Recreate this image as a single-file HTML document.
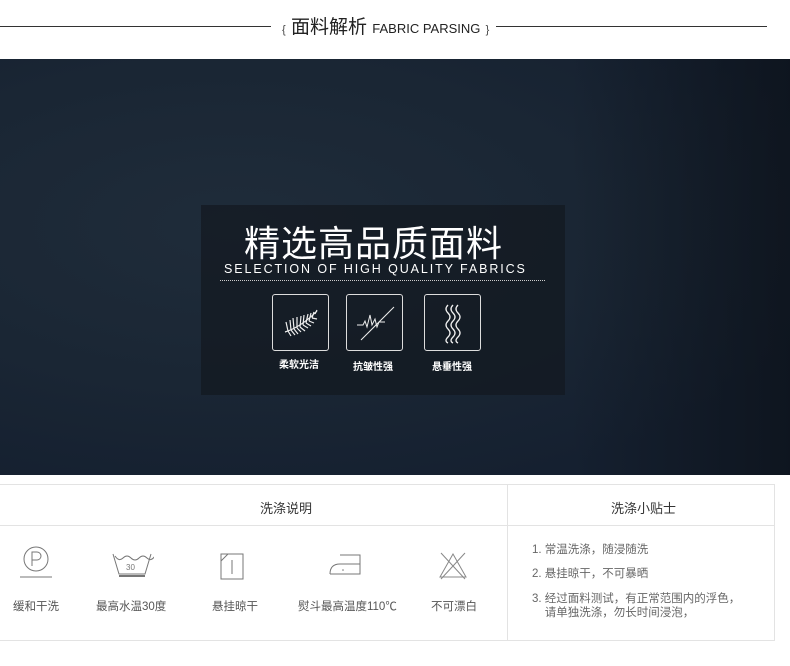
<!DOCTYPE html>
<html><head><meta charset="utf-8">
<style>
*{margin:0;padding:0;box-sizing:border-box}
body{width:790px;height:666px;background:#fff;font-family:"Liberation Sans","Noto Sans CJK SC",sans-serif;position:relative;overflow:hidden}
.hl{position:absolute;top:26px;height:1px;background:#333}
.title{position:absolute;top:12px;left:282px;font-size:19px;color:#222;white-space:nowrap}
.title .en{font-size:13px}
.title .br{font-size:11px;color:#444}
.banner{position:absolute;left:0;top:59px;width:790px;height:416px;
background:radial-gradient(ellipse at 30% 40%,#1f2c3a 0%,#1a2634 45%,#152030 80%),#18222f;}
.banner:after{content:"";position:absolute;right:0;top:0;width:220px;height:100%;background:linear-gradient(90deg,rgba(10,14,20,0),rgba(10,14,20,.6))}
.panel{position:absolute;left:201px;top:205px;width:364px;height:190px;background:rgba(18,24,32,.7);z-index:2}
.h1{position:absolute;left:43px;top:10px;font-size:36px;color:#fff;letter-spacing:1px;font-weight:400;white-space:nowrap}
.h2{position:absolute;left:23px;top:57px;font-size:12.5px;color:#fff;letter-spacing:1.9px;white-space:nowrap}
.dot{position:absolute;left:19px;top:75px;width:325px;border-top:1px dotted #ccc}
.ib{position:absolute;top:89px;width:57px;height:57px;border:1px solid #ddd;border-radius:3px}
.cap{position:absolute;font-size:10px;color:#fff;font-weight:bold;white-space:nowrap}
.tbl{position:absolute;top:484px;left:0;width:775px;height:157px;border:1px solid #e3e3e3;border-left:none}
.vline{position:absolute;left:507px;top:0;width:1px;height:100%;background:#e3e3e3}
.hline{position:absolute;left:0;top:40px;width:100%;height:1px;background:#e3e3e3}
.th{position:absolute;top:13px;font-size:13px;color:#333}
.lab{position:absolute;top:113px;font-size:11.5px;color:#555;white-space:nowrap}
.tip{position:absolute;left:532px;font-size:11.5px;color:#666;white-space:nowrap;line-height:14px}
svg{position:absolute}
</style></head><body>
<div class="hl" style="left:0;width:271px"></div>
<div class="hl" style="left:496px;width:271px"></div>
<div class="title"><span class="br">{</span> 面料解析 <span class="en">FABRIC PARSING</span> <span class="br">}</span></div>

<div class="banner"></div>
<div class="panel">
  <div class="h1">精选高品质面料</div>
  <div class="h2">SELECTION OF HIGH QUALITY FABRICS</div>
  <div class="dot"></div>
  <div class="ib" style="left:71px">
    <svg width="57" height="57" viewBox="0 0 57 57"><g stroke="#eee" stroke-width="1.2" fill="none">
      <path d="M12 37 Q28 32 44 16"/>
      <path d="M15 36l-2-9M18 35l-1-10M21 34l-1-11M24 33l0-11M27 32l1-11M30 30l1-10M33 28l2-9M36 26l2-8M39 23l2-6M42 19l2-4"/>
      <path d="M15 36l3 5M18 35l4 5M21 34l4 5M24 33l4 4M27 32l5 4M30 30l5 3M33 28l5 3M36 26l5 2M39 23l5 1"/>
    </g></svg>
  </div>
  <div class="ib" style="left:145px">
    <svg width="57" height="57" viewBox="0 0 57 57"><g stroke="#eee" stroke-width="1" fill="none">
      <path d="M10 30h6l2-4 2 6 3-12 2 10 3-6 2 8 2-5h6"/>
      <path d="M14 45L47 12"/>
    </g></svg>
  </div>
  <div class="ib" style="left:223px">
    <svg width="57" height="57" viewBox="0 0 57 57"><g stroke="#eee" stroke-width="1.3" fill="none">
      <path d="M23 10q-4 4 0 8t0 8 0 8 0 8 0 6"/>
      <path d="M28 10q-4 4 0 8t0 8 0 8 0 8 0 6"/>
      <path d="M33 10q-4 4 0 8t0 8 0 8 0 8 0 6"/>
    </g></svg>
  </div>
  <div class="cap" style="left:78px;top:151px">柔软光洁</div>
  <div class="cap" style="left:152px;top:153px">抗皱性强</div>
  <div class="cap" style="left:231px;top:153px">悬垂性强</div>
</div>

<div class="tbl">
  <div class="vline"></div>
  <div class="hline"></div>
  <div class="th" style="left:260px">洗涤说明</div>
  <div class="th" style="left:611px">洗涤小贴士</div>
  <svg style="left:18px;top:60px" width="36" height="36" viewBox="0 0 36 36"><g stroke="#777" fill="none" stroke-width="1"><circle cx="18" cy="14" r="12"/><path d="M14 21V7h5a4 4 0 0 1 0 8h-5"/><path d="M2 32h32"/></g></svg>
  <svg style="left:110px;top:64px" width="44" height="32" viewBox="0 0 44 32"><g stroke="#777" fill="none" stroke-width="1"><path d="M3 5l6 20h26l6-20"/><path d="M5 7q4 6 8 2t8 0 8 0 8 0 8-2"/><path d="M9 27h26" stroke-width="2"/></g><text x="16" y="21" font-size="8" fill="#777" font-family="Liberation Sans">30</text></svg>
  <svg style="left:219px;top:67px" width="28" height="32" viewBox="0 0 28 32"><g stroke="#777" fill="none" stroke-width="1"><rect x="2" y="2" width="22" height="25"/><path d="M2 9l7-7M13 8v14"/></g></svg>
  <svg style="left:328px;top:67px" width="36" height="28" viewBox="0 0 36 28"><g stroke="#777" fill="none" stroke-width="1"><path d="M2 22h30V3H12M2 22q0-10 10-10h20"/></g><circle cx="15" cy="18" r="0.8" fill="#777"/></svg>
  <svg style="left:438px;top:65px" width="30" height="34" viewBox="0 0 30 34"><g stroke="#888" fill="none" stroke-width="1"><path d="M15 4L2 27h26z"/><path d="M3 3l24 26M27 3L3 29"/></g></svg>
  <div class="lab" style="left:13px">缓和干洗</div>
  <div class="lab" style="left:96px">最高水温30度</div>
  <div class="lab" style="left:212px">悬挂晾干</div>
  <div class="lab" style="left:298px">熨斗最高温度110℃</div>
  <div class="lab" style="left:431px">不可漂白</div>
</div>
<div class="tip" style="top:543px">1. 常温洗涤，随浸随洗</div>
<div class="tip" style="top:567px">2. 悬挂晾干，不可暴晒</div>
<div class="tip" style="top:592px">3. 经过面料测试，有正常范围内的浮色，<br>&nbsp;&nbsp;&nbsp;&nbsp;请单独洗涤，勿长时间浸泡，</div>
</body></html>
